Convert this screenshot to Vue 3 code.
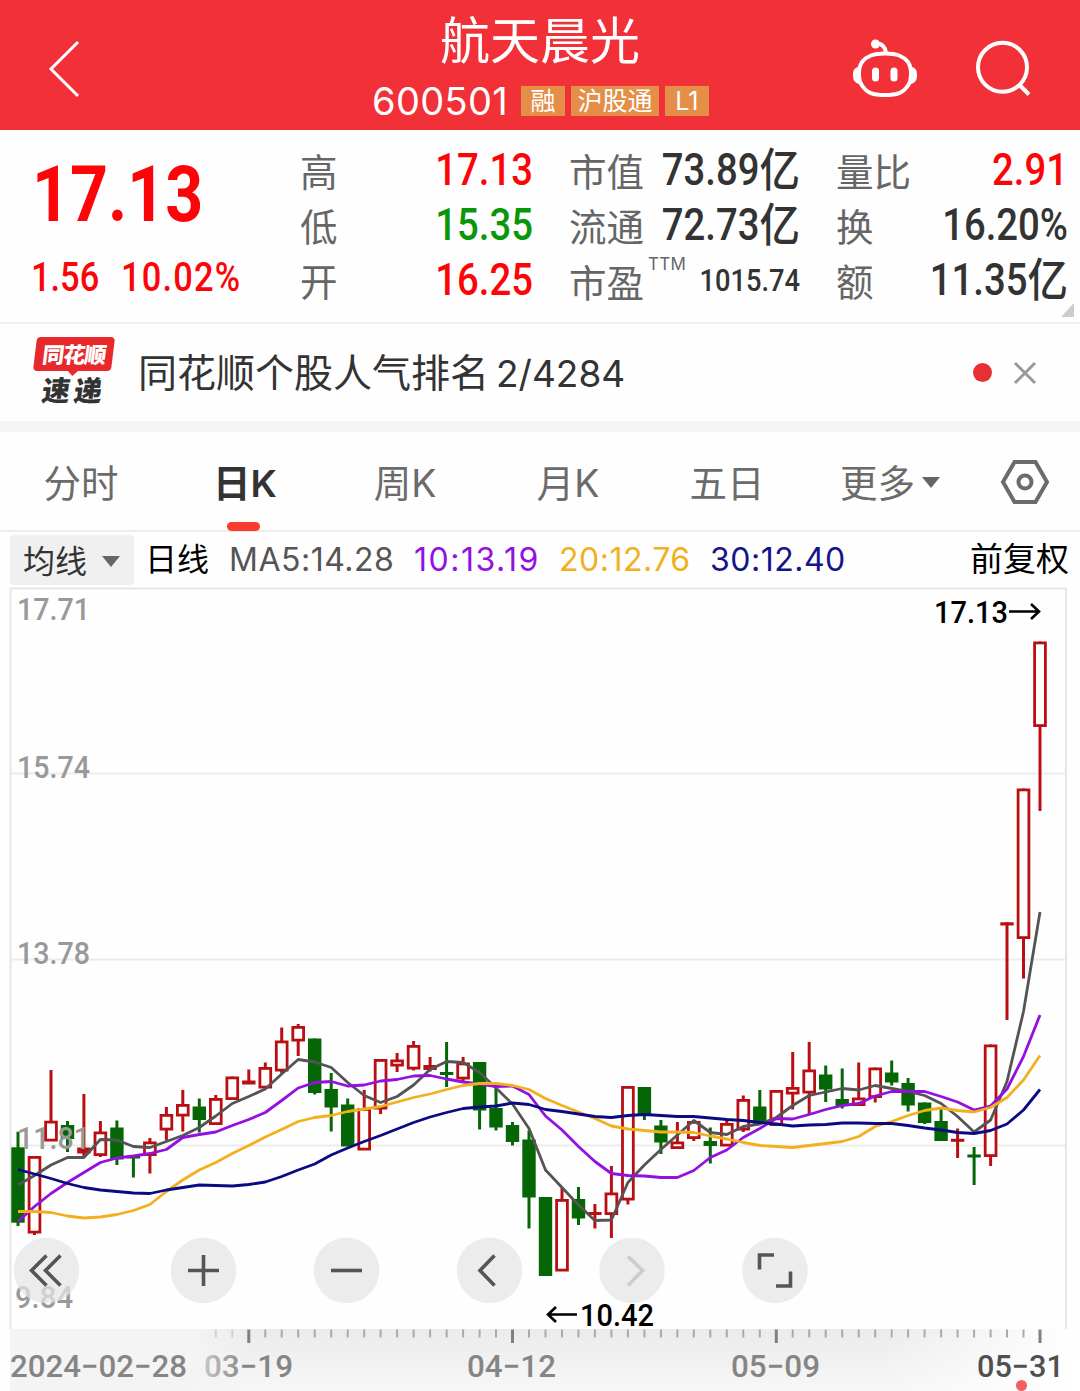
<script setup>
import { ref } from 'vue'

const tabs = ['分时', '日K', '周K', '月K', '五日']
let active = ref(1)
let showNews = ref(true)

const gridLines = [773, 959, 1145]
const prices = [
  { text: '17.71', y: 620 },
  { text: '15.74', y: 778 },
  { text: '13.78', y: 964 },
  { text: '11.81', y: 1149 },
]

const first = 18
const step = 16.484
const xAt = (i) => +(first + i * step).toFixed(1)

// [up, body top, body bottom, high, low]
const candles = [
  [0, 1147.3, 1222.7, 1131.7, 1226], [1, 1156, 1233.5, 1156, 1235], [1, 1120.7, 1141.5, 1070, 1141],
  [0, 1125, 1139, 1121, 1152], [1, 1147.5, 1153.5, 1094, 1156], [1, 1131.5, 1156, 1121, 1157],
  [0, 1127.5, 1159.5, 1120.5, 1165], [0, 1155.5, 1158.5, 1155, 1177.5], [1, 1141.5, 1156, 1138, 1173.5],
  [1, 1114, 1130.5, 1107, 1140.5], [1, 1104, 1116.5, 1090, 1131.5], [0, 1106.5, 1120, 1098.5, 1132.5],
  [1, 1098, 1125, 1095, 1125], [1, 1076.5, 1100, 1076.5, 1100], [1, 1080.5, 1084.5, 1069.5, 1084],
  [1, 1067, 1088.5, 1062.5, 1088], [1, 1040.5, 1071.5, 1027.5, 1073.5], [1, 1026, 1041.5, 1024, 1056],
  [0, 1038.5, 1093, 1038.5, 1094.5], [0, 1089, 1107.5, 1073, 1131.5], [0, 1104.5, 1146.5, 1098.5, 1146],
  [1, 1108, 1150.5, 1090, 1150], [1, 1059, 1109.5, 1059, 1114], [1, 1059.5, 1066.5, 1053, 1072],
  [1, 1045, 1069.5, 1041, 1070.5], [1, 1065, 1070, 1057, 1071.5], [0, 1072, 1075, 1042, 1087],
  [1, 1062.5, 1079.5, 1057, 1083], [0, 1062, 1110.5, 1062, 1129.5], [0, 1108, 1127.5, 1088, 1130.5],
  [0, 1125, 1142, 1122, 1145.5], [0, 1139.5, 1197.5, 1130.5, 1228.5], [0, 1197, 1276, 1197, 1276],
  [1, 1199, 1271.5, 1188, 1271], [0, 1199, 1218.5, 1187, 1225], [1, 1212, 1215, 1204, 1228.5],
  [1, 1192.5, 1215, 1166, 1238], [1, 1086, 1200.5, 1086, 1204.5], [0, 1087, 1114.5, 1087, 1120],
  [0, 1125.5, 1142.5, 1120, 1154], [1, 1141.5, 1149, 1122, 1149], [1, 1121, 1139, 1121, 1141],
  [0, 1141, 1146, 1127.5, 1163.5], [1, 1123, 1146.5, 1120, 1146], [1, 1099, 1130.5, 1095.5, 1132],
  [0, 1106.5, 1124, 1090, 1124], [1, 1090, 1126, 1090, 1126], [1, 1087, 1094.5, 1052, 1109.5],
  [1, 1069.5, 1093.5, 1042, 1114.5], [0, 1074.5, 1089.5, 1065.5, 1102], [0, 1099, 1106, 1068.5, 1108.5],
  [1, 1097.5, 1106, 1062.5, 1106], [1, 1067.5, 1098, 1067.5, 1102.5], [0, 1072.5, 1082.5, 1060.5, 1085.5],
  [0, 1083, 1105.5, 1078, 1111.5], [0, 1102.5, 1123, 1102.5, 1124], [0, 1121, 1141, 1109, 1141],
  [1, 1138.8, 1141.8, 1128.5, 1158], [0, 1154.5, 1157.5, 1147, 1185], [1, 1044.5, 1157, 1044.5, 1166],
  [1, 922.3, 925.5, 922.3, 1020], [1, 788.5, 939, 788.5, 978.5], [1, 641.5, 727, 641.5, 811],
]

const averages = [
  { color: '#545454', y: [1185, 1175.5, 1165, 1157.5, 1157.5, 1139.5, 1140, 1146.5, 1147.5, 1141.5, 1135.5, 1127.5, 1116, 1103.5, 1096.5, 1089, 1074, 1059.5, 1062, 1067.5, 1082.5, 1095.5, 1102.5, 1096.5, 1085, 1069.5, 1061.5, 1062.5, 1072.5, 1088, 1104, 1128.5, 1170, 1187.5, 1205, 1220.5, 1220, 1182.5, 1165, 1149.5, 1135, 1120.5, 1132.5, 1134.5, 1126.5, 1124, 1117.5, 1105.5, 1095.5, 1092, 1088.5, 1090, 1085.5, 1088.5, 1091.5, 1095.5, 1103.5, 1116.5, 1132, 1120, 1081.5, 1011.5, 912] },
  { color: '#9310e0', y: [1221.5, 1206.5, 1193.5, 1182.5, 1172.5, 1162.5, 1158, 1156, 1153.5, 1149.5, 1137.5, 1134.5, 1132, 1125.5, 1119.5, 1112.5, 1100.5, 1088, 1082.5, 1081.5, 1086, 1085, 1081, 1079.5, 1076, 1075.5, 1079, 1082, 1084, 1086.5, 1086, 1094.5, 1116, 1130, 1146.5, 1161.5, 1173.5, 1175.5, 1176, 1177.5, 1177.5, 1170.5, 1157.5, 1150, 1137.5, 1128.5, 1118.5, 1119, 1114.5, 1109.5, 1105.5, 1103.5, 1096, 1091.5, 1091.5, 1091.5, 1096.5, 1102, 1110, 1106, 1089, 1056.5, 1015] },
  { color: '#f2b01e', y: [1211.5, 1211.5, 1212.5, 1216, 1218, 1217, 1214.5, 1210.5, 1204.5, 1191.5, 1180, 1170, 1162.5, 1153.5, 1145.5, 1137, 1129.5, 1121.5, 1117.5, 1115.5, 1111.5, 1109, 1106.5, 1102, 1097.5, 1094, 1089.5, 1085.5, 1083.5, 1083.5, 1085.5, 1089.5, 1098.5, 1105.5, 1112, 1118.5, 1126, 1129, 1130.5, 1132, 1132, 1132.5, 1136, 1139, 1142.5, 1145.5, 1146.5, 1147.5, 1145.5, 1143.5, 1141.5, 1136.5, 1126.5, 1121.5, 1115.5, 1110.5, 1108, 1110.5, 1112, 1107.5, 1097.5, 1080, 1055.5] },
  { color: '#0a0a82', y: [1169.5, 1174, 1178.5, 1183.5, 1187.5, 1190, 1191.5, 1193, 1193.5, 1190, 1187.5, 1185, 1185.5, 1186, 1184.5, 1182, 1176.5, 1170, 1164, 1155, 1148, 1141.5, 1135.5, 1129, 1122.5, 1117, 1112.5, 1108.5, 1107, 1106, 1103, 1104.5, 1109.5, 1111.5, 1114, 1116.5, 1117.5, 1115.5, 1114.5, 1115.5, 1116.5, 1116.5, 1118, 1119.5, 1120.5, 1122.5, 1124, 1126, 1125, 1124.5, 1123, 1123, 1123.5, 1123.5, 1125.5, 1128, 1130, 1132.5, 1133.5, 1130.5, 1124, 1110, 1089.5] },
]
const line = (ys) => ys.map((y, i) => xAt(i) + ',' + y).join(' ')

// date ruler, one tick per candle
const ticks = []
for (let i = 12; i < 63; i++) {
  ticks.push({ x: xAt(i), major: (i - 14) % 16 === 0, faint: i < 14 })
}

const tools = [
  { x: 46.5, d: 'M0 -15L-15 0L0 15M14 -15L-1 0L14 15' },
  { x: 203.5, d: 'M-15.500 0H15.500M0 -15.500V15.500' },
  { x: 346.5, d: 'M-15.500 0H15.500' },
  { x: 489.5, d: 'M5 -15L-9.500 0L5 15' },
  { x: 632, d: 'M-4 -14L10.500 0L-4 15', off: true },
  { x: 775, d: 'M-15.500 -1V-15.500H-1M15.500 1V15.500H1' },
]
</script>

<template>
<div class="page">
  <header class="top">
    <svg class="back" width="40" height="60" viewBox="0 0 40 60"><path d="M33 4L6 31L33 58" /></svg>
    <div class="title">
      <h1>航天晨光</h1>
      <div class="code">
        <span class="num">600501</span>
        <span class="tag">融</span>
        <span class="tag wide">沪股通</span>
        <span class="tag">L1</span>
      </div>
    </div>
    <div class="icons">
      <svg width="66" height="62" viewBox="0 0 66 62">
        <path d="M33 14.500C45 14.500 51 17 56 23C60 29 60 41 56 46.500C51 54 45 56 33 56C21 56 15 54 10 46.500C6 41 6 29 10 23C15 17 21 14.500 33 14.500Z" />
        <path d="M24 4.500C30 4 33 7 34 14" />
        <circle class="fill" cx="23.500" cy="5" r="4.500" />
        <path class="fill" d="M7.500 27.500C2 29 1 31 1 36C1 41 2 43.500 7.500 45ZM58.500 27.500C64 29 65 31 65 36C65 41 64 43.500 58.500 45Z" />
        <rect class="fill" x="20" y="28.500" width="7" height="14" rx="3.500" />
        <rect class="fill" x="38.500" y="28.500" width="7" height="14" rx="3.500" />
      </svg>
      <svg width="60" height="60" viewBox="0 0 60 60">
        <circle cx="28.500" cy="28.300" r="24.500" /><path d="M45 45.500L55 55.500" />
      </svg>
    </div>
  </header>

  <section class="quote">
    <div class="now">
      <div class="price"><b>17.13</b></div>
      <div class="change"><b>1.56</b><b class="rate">10.02%</b></div>
    </div>
    <dl>
      <div><dt>高</dt><dd class="red">17.13</dd></div>
      <div><dt>低</dt><dd class="green">15.35</dd></div>
      <div><dt>开</dt><dd class="red">16.25</dd></div>
    </dl>
    <dl>
      <div><dt>市值</dt><dd>73.89<i>亿</i></dd></div>
      <div><dt>流通</dt><dd>72.73<i>亿</i></dd></div>
      <div><dt class="pe">市盈<sup>TTM</sup></dt><dd class="small">1015.74</dd></div>
    </dl>
    <dl>
      <div><dt>量比</dt><dd class="red">2.91</dd></div>
      <div><dt>换</dt><dd>16.20%</dd></div>
      <div><dt>额</dt><dd>11.35<i>亿</i></dd></div>
    </dl>
    <span class="corner"></span>
  </section>

  <section class="news">
    <div class="logo">
      <div class="flag"><span>同花顺</span></div>
      <div class="express">速递</div>
    </div>
    <p>同花顺个股人气排名<span>2/4284</span></p>
    <template v-if="showNews">
      <span class="dot"></span>
      <svg class="close" width="24" height="24" viewBox="0 0 24 24" @click="showNews = false"><path d="M2 2L22 22M22 2L2 22" /></svg>
    </template>
  </section>

  <nav class="tabs">
    <div v-for="(tab, index) in tabs" :key="tab" class="tab" :class="{ active: active === index }" @click="active = index">{{ tab }}</div>
    <div class="tab more">更多<span class="arrow"></span></div>
    <svg class="setting" width="50" height="46" viewBox="0 0 50 46">
      <path d="M14.500 3H35.500L47 23L35.500 43H14.500L3 23Z" /><circle cx="25" cy="23" r="6.500" />
    </svg>
  </nav>

  <div class="legend">
    <span class="chip">均线<span class="arrow"></span></span>
    <span class="day">日线</span>
    <span class="ma5">MA5:14.28</span>
    <span class="ma10">10:13.19</span>
    <span class="ma20">20:12.76</span>
    <span class="ma30">30:12.40</span>
    <span class="adjust">前复权</span>
  </div>

  <svg class="chart" width="1080" height="804" viewBox="0 587 1080 804">
    <defs>
      <linearGradient id="ruler" x1="0" y1="0" x2="0" y2="1">
        <stop offset="0" stop-color="#ebebec" /><stop offset="1" stop-color="#f7f7f7" />
      </linearGradient>
      <linearGradient id="left">
        <stop offset="0" stop-color="#f5f4f5" /><stop offset=".75" stop-color="#f5f4f5" /><stop offset="1" stop-color="#f5f4f5" stop-opacity="0" />
      </linearGradient>
      <linearGradient id="right">
        <stop offset="0" stop-color="#fff" stop-opacity="0" /><stop offset="1" stop-color="#fff" />
      </linearGradient>
      <linearGradient id="fade" gradientUnits="userSpaceOnUse" x1="200" y1="0" x2="245" y2="0">
        <stop offset="0" stop-color="#ccc" /><stop offset="1" stop-color="#858585" />
      </linearGradient>
    </defs>
    <path class="frame" d="M10.500 1329V588.500H1066V1329" />
    <path v-for="y in gridLines" :key="y" class="grid" :d="'M11 ' + y + '.500H1065'" />

    <g v-for="(c, i) in candles" :key="i" :class="c[0] ? 'up' : 'down'">
      <path :d="'M' + xAt(i) + ' ' + c[3] + 'V' + c[4]" />
      <rect v-if="c[0] && c[2] - c[1] > 6" :x="xAt(i) - 5.4" :y="c[1] + 1.4" width="10.8" :height="c[2] - c[1] - 2.8" />
      <rect v-else class="solid" :x="xAt(i) - 6.7" :y="c[1]" width="13.4" :height="c[2] - c[1]" />
    </g>
    <polyline v-for="a in averages" :key="a.color" class="avg" :points="line(a.y)" :stroke="a.color" />

    <text v-for="p in prices" :key="p.text" class="label" x="17" :y="p.y" textLength="73" lengthAdjust="spacingAndGlyphs">{{ p.text }}</text>
    <text class="label" x="15" y="1308" textLength="58" lengthAdjust="spacingAndGlyphs">9.84</text>

    <text class="mark" x="934" y="622.500" textLength="74" lengthAdjust="spacingAndGlyphs">17.13</text>
    <path class="pointer" d="M1009 611.500H1039M1031 604L1039 611.500L1031 619" />
    <text class="mark" x="580" y="1326" textLength="74" lengthAdjust="spacingAndGlyphs">10.42</text>
    <path class="pointer" d="M577 1314.500H548M556 1307L548 1314.500L556 1322" />

    <g v-for="t in tools" :key="t.x" class="tool" :class="{ off: t.off }" :transform="'translate(' + t.x + ' 1270.500)'">
      <circle r="32.800" /><path :d="t.d" />
    </g>

    <rect x="10" y="1329" width="1070" height="62" fill="url(#ruler)" />
    <rect x="10" y="1329" width="240" height="62" fill="url(#left)" />
    <rect x="880" y="1329" width="200" height="62" fill="url(#right)" />
    <path v-for="t in ticks" :key="t.x" class="tick" :class="{ major: t.major, faint: t.faint }" :d="'M' + t.x + ' 1329.500V' + (t.major ? 1343 : 1337.5)" />
    <text class="date" x="10" y="1377" textLength="177" lengthAdjust="spacingAndGlyphs">2024−02−28</text>
    <text class="date" x="204" y="1377" textLength="89" lengthAdjust="spacingAndGlyphs" fill="url(#fade)">03−19</text>
    <text class="date" x="467" y="1377" textLength="89" lengthAdjust="spacingAndGlyphs">04−12</text>
    <text class="date" x="731" y="1377" textLength="89" lengthAdjust="spacingAndGlyphs">05−09</text>
    <text class="date last" x="977" y="1377" textLength="87" lengthAdjust="spacingAndGlyphs">05−31</text>
    <circle cx="1021.500" cy="1385.500" r="5.500" fill="#f0605f" />
  </svg>
</div>
</template>

<style>
body{
  margin: 0;
  background: #fff;
}
</style>

<style scoped>
.page{
  width: 1080px;
  height: 1391px;
  overflow: hidden;
  background: #fefefe;
  color: #333;
  font-family: Inter, 'Noto Sans CJK SC', sans-serif;
}
.top{
  display: grid;
  grid-template-columns: 300px 1fr 300px;
  height: 130px;
  background: #f23038;
  color: #fff;
}
.top svg{
  fill: none;
  stroke: #fff;
  stroke-width: 4;
}
.top .fill{
  fill: #fff;
  stroke: none;
}
.top .back{
  margin: 38px 0 0 45px;
  stroke-width: 3;
}
.title{
  display: flex;
  flex-direction: column;
  align-items: center;
}
h1{
  margin: 4px 0 0;
  font-size: 50px;
  line-height: 74px;
  font-weight: 400;
}
.code{
  display: flex;
  align-items: center;
  gap: 6px;
  height: 30px;
  margin: 8px 0 0 1px;
}
.num{
  margin-right: 7px;
  font-size: 38px;
  line-height: 30px;
  letter-spacing: 0.3px;
}
.tag{
  width: 44px;
  height: 30px;
  line-height: 30px;
  font-size: 25px;
  text-align: center;
  background: #e58e48;
}
.wide{
  width: 88px;
}
.icons{
  display: flex;
  gap: 56px;
  padding: 39px 0 0 72px;
}
.quote{
  position: relative;
  display: grid;
  grid-template-columns: 264px 233px 231px 232px;
  column-gap: 36px;
  box-sizing: border-box;
  height: 194px;
  border-bottom: 2px solid #f0f0f0;
}
.now{
  color: #fb0509;
  font-family: Roboto, sans-serif;
}
.now b{
  display: inline-block;
  font-weight: 700;
  transform: scaleX(0.86);
  transform-origin: left;
}
.price{
  margin: 19px 0 0 32px;
  font-size: 77px;
  line-height: 92px;
}
.change{
  display: flex;
  margin: 14px 0 0 31px;
  font-size: 40px;
  line-height: 46px;
}
.change b{
  width: 90px;
  font-weight: 500;
}
.change .rate{
  letter-spacing: 1.4px;
}
dl{
  margin: 15px 0 0;
}
dl div{
  display: flex;
  justify-content: space-between;
  height: 55px;
  line-height: 56px;
}
dt{
  flex-shrink: 0;
  font-size: 37.5px;
  color: #666;
  white-space: nowrap;
}
.pe{
  position: relative;
  top: 1px;
}
sup{
  position: absolute;
  left: 79px;
  top: -19px;
  font-size: 17px;
  line-height: 55px;
  letter-spacing: 0.3px;
}
/* narrow digits, kept flush with the right edge of the column */
dd{
  display: flex;
  justify-content: flex-end;
  width: 0;
  margin: 0;
  font-family: Roboto, 'Noto Sans CJK SC', sans-serif;
  font-size: 43.5px;
  font-weight: 500;
  line-height: 51px;
  white-space: nowrap;
  transform: scaleX(0.88);
  transform-origin: right;
}
dd i{
  font-style: normal;
  font-size: 46px;
}
.small{
  font-size: 31px;
  line-height: 52px;
}
.red{
  color: #fb0509;
}
.green{
  color: #0a960a;
}
.corner{
  position: absolute;
  right: 6px;
  bottom: 5px;
  border-left: 13px solid transparent;
  border-bottom: 14px solid #ccc;
}
.news{
  display: flex;
  align-items: center;
  height: 97px;
  border-bottom: 11px solid #f5f5f5;
}
.logo{
  width: 78px;
  margin-left: 35px;
}
.flag{
  position: relative;
  height: 34px;
  border-radius: 4px;
  background: #e8282b;
  transform: skewX(-7deg);
  text-align: center;
}
.flag::after{
  content: '';
  position: absolute;
  left: 35px;
  top: 34px;
  border: 5px solid transparent;
  border-top-color: #e8282b;
}
.flag span{
  display: block;
  color: #fff;
  font-size: 22px;
  line-height: 36px;
  font-weight: 900;
  letter-spacing: -1px;
}
.express{
  margin: 4px 0 0 7px;
  font-size: 28px;
  line-height: 33px;
  font-weight: 900;
  letter-spacing: 4px;
  transform: skewX(-8deg);
  white-space: nowrap;
}
.news p{
  flex: 1;
  margin: 1px 0 0 25px;
  font-size: 39px;
  line-height: 56px;
}
.news p span{
  margin-left: 7px;
  font-size: 37px;
}
.dot{
  width: 19px;
  height: 19px;
  border-radius: 50%;
  background: #e83032;
}
.close{
  margin: 0 43px 0 21px;
  fill: none;
  stroke: #999;
  stroke-width: 3;
}
.tabs{
  position: relative;
  display: grid;
  grid-template-columns: 162px 166px 154px 172px 146px 180px 1fr;
  box-sizing: border-box;
  height: 100px;
  border-bottom: 2px solid #eee;
}
.tab{
  position: relative;
  text-align: center;
  font-size: 37.5px;
  line-height: 103px;
  height: 98px;
  color: #6b6b6b;
}
.active{
  color: #333;
  font-weight: 600;
}
.active::after{
  content: '';
  position: absolute;
  left: 65px;
  bottom: -1px;
  width: 33px;
  height: 9px;
  border-radius: 5px;
  background: #fa3b30;
}
.arrow{
  display: inline-block;
  margin-left: 9px;
  vertical-align: 6px;
  border: 9px solid transparent;
  border-top: 11px solid #666;
  border-bottom: 0;
}
.more .arrow{
  margin-left: 7px;
  vertical-align: 9px;
}
.setting{
  margin: 27px 0 0 20px;
  fill: none;
  stroke: #6b6b6b;
  stroke-width: 4;
}
.legend{
  display: flex;
  align-items: center;
  height: 55px;
  font-size: 32px;
  line-height: 53px;
  white-space: nowrap;
}
.chip{
  box-sizing: border-box;
  width: 124px;
  height: 50px;
  margin: 0 11px 0 10px;
  padding-left: 13px;
  border-radius: 4px;
  background: #f0f0f0;
}
.chip .arrow{
  margin-left: 15px;
}
.day{
  width: 84px;
  color: #000;
}
.ma5{
  width: 185px;
  color: #555;
  letter-spacing: 0.5px;
}
.ma10{
  width: 145px;
  color: #9310e0;
  letter-spacing: 1.5px;
}
.ma20{
  width: 151px;
  color: #f2b01e;
  letter-spacing: 0.5px;
}
.ma30{
  color: #14148a;
  letter-spacing: 0.5px;
}
.adjust{
  margin: 0 11px 0 auto;
  font-size: 33px;
  color: #000;
}
.chart{
  display: block;
  font-family: Roboto, sans-serif;
}
.frame, .grid{
  fill: none;
  stroke: #e6e6e6;
  stroke-width: 2;
}
.grid{
  stroke: #ececec;
}
.up{
  stroke: #b90e12;
  stroke-width: 3;
  fill: #fff;
}
.down{
  stroke: #056605;
  stroke-width: 3;
}
.up rect{
  stroke-width: 2.8;
}
.up .solid{
  fill: #b90e12;
  stroke: none;
}
.down .solid{
  fill: #056605;
  stroke: none;
}
.avg{
  fill: none;
  stroke-width: 2.8;
  stroke-linejoin: round;
}
.label{
  font-size: 32px;
  font-weight: 500;
  fill: #999;
}
.mark{
  font-size: 32px;
  font-weight: 500;
  fill: #000;
}
.pointer{
  fill: none;
  stroke: #000;
  stroke-width: 2.6;
}
.tool circle{
  fill: #e4e4e4;
  fill-opacity: 0.72;
}
.tool path{
  fill: none;
  stroke: #555;
  stroke-width: 3.6;
}
.tool.off path{
  stroke: #ccc;
}
.tick{
  stroke: #aaa;
  stroke-width: 2;
}
.major{
  stroke: #808080;
  stroke-width: 3;
}
.faint{
  stroke: #d0d0d0;
}
.date{
  font-size: 31px;
  font-weight: 500;
}
.date:not([fill]){
  fill: #858585;
}
.date.last{
  fill: #505050;
}
</style>
